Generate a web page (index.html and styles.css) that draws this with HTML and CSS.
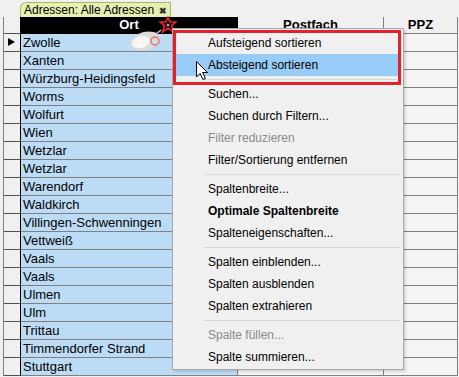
FILE: index.html
```
<!DOCTYPE html>
<html lang="de">
<head>
  <meta charset="UTF-8">
  <title>Adressen: Alle Adressen</title>
  <link rel="stylesheet" href="styles.css">
</head>
<body>

<div class="tabbar">
  <div class="tab">Adressen: Alle Adressen<span class="tab-close">&#10006;</span></div>
</div>

<div class="grid">
  <div class="cell sel head"></div>
  <div class="cell ort head">Ort</div>
  <div class="cell col head">Postfach</div>
  <div class="cell col head">PPZ</div>
</div>
<div class="grid" id="rows"></div>

<!-- drag hint over the header -->
<svg class="star" width="18" height="18" viewBox="0 0 18 18">
  <polygon points="9,1 11,6 17,6 12.5,9.5 14.5,16 9,12 3.5,16 5.5,9.5 1,6 7,6" fill="none" stroke="#e8202a" stroke-width="1.6"/>
  <circle cx="9" cy="9" r="1.5" fill="#9a9a9a"/>
</svg>
<svg class="mouse" width="36" height="22" viewBox="0 0 36 22">
  <path d="M33,1 C31,3 29,4 26,6" stroke="#b8b8b8" stroke-width="1.5" fill="none"/>
  <ellipse cx="17" cy="12" rx="15" ry="9" fill="#dcdcdc" transform="rotate(-15 17 12)"/>
  <ellipse cx="13" cy="13" rx="9" ry="6" fill="#f6f6f6" transform="rotate(-15 13 13)"/>
  <circle cx="27" cy="12" r="4" fill="none" stroke="#f06a6a" stroke-width="1.5"/>
</svg>

<div class="menu">
  <div class="item">Aufsteigend sortieren</div>
  <div class="item active">Absteigend sortieren</div>
  <div class="sep"></div>
  <div class="item">Suchen...</div>
  <div class="item">Suchen durch Filtern...</div>
  <div class="item disabled">Filter reduzieren</div>
  <div class="item">Filter/Sortierung entfernen</div>
  <div class="sep"></div>
  <div class="item">Spaltenbreite...</div>
  <div class="item bold">Optimale Spaltenbreite</div>
  <div class="item">Spalteneigenschaften...</div>
  <div class="sep"></div>
  <div class="item">Spalten einblenden...</div>
  <div class="item">Spalten ausblenden</div>
  <div class="item">Spalten extrahieren</div>
  <div class="sep"></div>
  <div class="item disabled">Spalte füllen...</div>
  <div class="item">Spalte summieren...</div>
</div>
<div class="mark"></div>

<svg class="cursor" width="13" height="20" viewBox="0 0 13 20">
  <polygon points="0.5,0.5 0.5,16 4,12.5 7,18.5 9.5,17.5 6.5,11.5 11.5,11.5" fill="#fff" stroke="#000" stroke-width="1"/>
</svg>

<script>
  // Orte in absteigender Reihenfolge wie in der Tabelle
  const orte = ['Zwolle', 'Xanten', 'Würzburg-Heidingsfeld', 'Worms', 'Wolfurt', 'Wien',
    'Wetzlar', 'Wetzlar', 'Warendorf', 'Waldkirch', 'Villingen-Schwenningen', 'Vettweiß',
    'Vaals', 'Vaals', 'Ulmen', 'Ulm', 'Trittau', 'Timmendorfer Strand', 'Stuttgart'];

  const rows = document.getElementById('rows');
  orte.forEach(function (ort, i) {
    rows.innerHTML += `
      <div class="cell sel">${i === 0 ? '<span class="pointer"></span>' : ''}</div>
      <div class="cell ort">${ort}</div>
      <div class="cell col"></div>
      <div class="cell col"></div>
    `;
  });
</script>

</body>
</html>
```

FILE: styles.css
```
body {
  margin: 0;
  background-color: #f0f0f0;
  font-family: "Liberation Sans", Arial, sans-serif;
  color: #000000;
  overflow: hidden;
}
.tabbar {
  height: 17px;
  padding-left: 20px;
  box-sizing: border-box;
}
.tab {
  display: inline-block;
  height: 16px;
  line-height: 15px;
  padding: 0 3px 0 3px;
  font-size: 12px;
  white-space: nowrap;
  background-color: #e6f0b2; /* pale green */
  border: 1px solid #a9b96a;
  border-bottom: none;
  border-radius: 6px 0 0 0;
  box-sizing: border-box;
}
.tab-close {
  font-size: 9px;
  font-weight: bold;
  margin-left: 5px;
  color: #333333;
}
.grid {
  display: grid;
  grid-template-columns: 17px 217px 146px 74px;
  margin-left: 3px;
  border-left: 1px solid #808080;
}
.grid:first-of-type {
  border-top: 1px solid #808080;
}
.cell {
  height: 18px;
  box-sizing: border-box;
  border-right: 1px solid #808080;
  border-bottom: 1px solid #808080;
  font-size: 13px;
  line-height: 17px;
  white-space: nowrap;
  overflow: hidden;
}
.cell.head {
  height: 17px;
  line-height: 16px;
  text-align: center;
  font-weight: bold;
}
.cell.sel {
  background-color: #f0f0f0;
  border-right-color: #000000;
  border-bottom-color: #505050;
  position: relative;
}
.cell.ort {
  background-color: #bcdcf6; /* selected column */
  padding-left: 2px;
}
.cell.ort.head {
  background-color: #000000;
  color: #ffffff;
  padding-left: 0;
  border-color: #000000;
}
.cell.col {
  background-color: #f4f4f4;
}
.cell.col.head {
  background-color: #f0f0f0;
}
.pointer {
  position: absolute;
  left: 4px;
  top: 4px;
  border-left: 7px solid #000000;
  border-top: 4.5px solid transparent;
  border-bottom: 4.5px solid transparent;
}
.menu {
  position: absolute;
  left: 172px;
  top: 28px;
  width: 232px;
  box-sizing: border-box;
  padding: 3px 0 1px 0;
  background-color: #f0f0f0;
  border: 1px solid #a8a8a8;
  box-shadow: 2px 2px 2px rgba(0, 0, 0, 0.12);
  font-size: 12px;
}
.item {
  height: 22px;
  line-height: 22px;
  margin: 0 4px 0 3px;
  padding-left: 32px;
}
.item.active {
  background-color: #98cbf6; /* hover blue */
}
.item.disabled {
  color: #8a8a8a;
}
.item.bold {
  font-weight: bold;
}
.sep {
  height: 1px;
  margin: 3px 3px 3px 31px;
  background-color: #d8d8d8;
}
.mark {
  position: absolute;
  left: 173px;
  top: 30px;
  width: 228px;
  height: 55px;
  box-sizing: border-box;
  border: 3px solid #e3202b; /* red frame */
}
.cursor {
  position: absolute;
  left: 196px;
  top: 61px;
}
.star {
  position: absolute;
  left: 159px;
  top: 16px;
}
.mouse {
  position: absolute;
  left: 128px;
  top: 29px;
}
```
